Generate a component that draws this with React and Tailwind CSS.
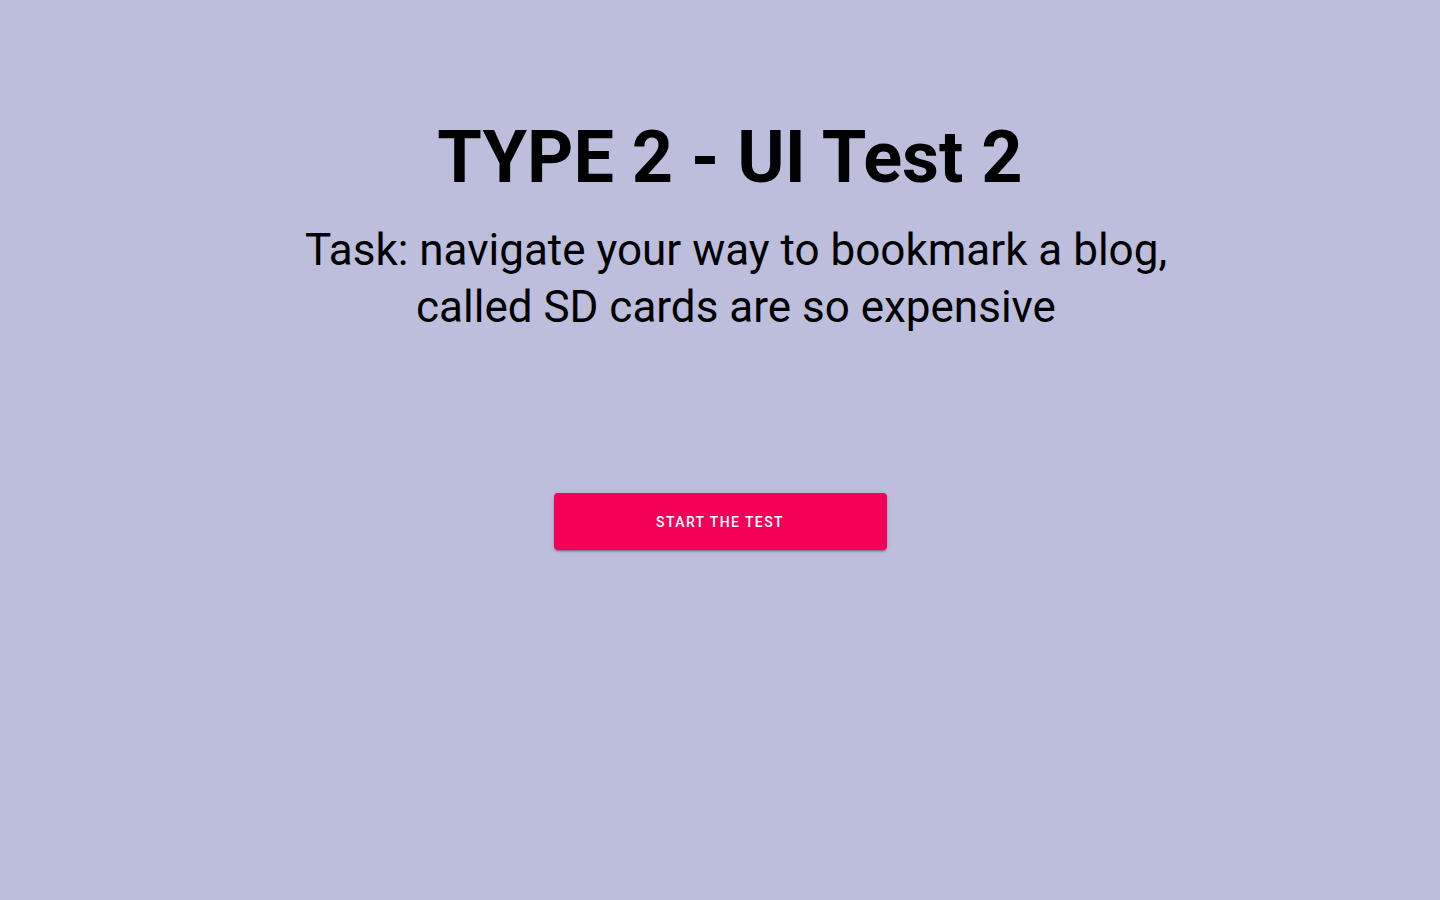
export default function App() {
  return (
    <div className="min-h-[900px] w-full bg-[#bdbedb] flex flex-col items-center" style={{ fontFamily: 'Roboto, "Liberation Sans", sans-serif' }}>
      <div className="w-[900px] pl-[20px] text-center text-black">
        <h1 className="mt-[115px] text-[72px] font-bold leading-[1.2]">TYPE 2 - UI Test 2</h1>
        <p className="mt-[21px] pl-[12px] text-[44px] leading-[57px]">Task: navigate your way to bookmark a blog, called SD cards are so expensive</p>
      </div>
      <button className="mt-[157px] w-[333px] h-[57px] pt-[2px] rounded bg-[#f50057] text-white text-[14px] font-medium tracking-[0.1em] uppercase shadow-[0_3px_1px_-2px_rgba(0,0,0,0.2),0_2px_2px_0_rgba(0,0,0,0.14),0_1px_5px_0_rgba(0,0,0,0.12)]">
        Start the test
      </button>
    </div>
  );
}
